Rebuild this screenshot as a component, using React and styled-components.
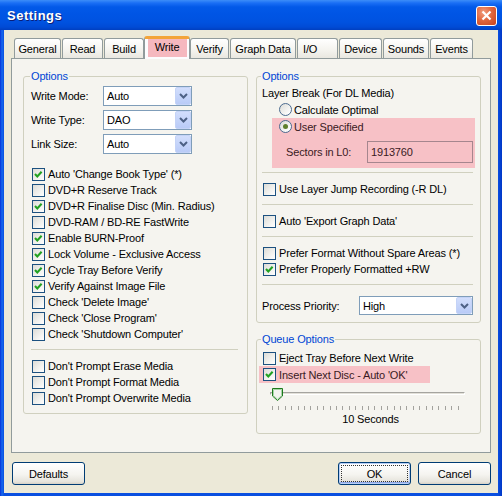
import React from 'react'
import styled, { createGlobalStyle } from 'styled-components'

const GlobalStyle = createGlobalStyle`
    html, body {
        margin: 0;
        padding: 0;
        background: #0B48DB;
    }
    * {
        box-sizing: border-box;
    }
`

const tabs = [
    { name: 'General', w: 47 },
    { name: 'Read', w: 41 },
    { name: 'Build', w: 40 },
    { name: 'Write', w: 46, active: true },
    { name: 'Verify', w: 39 },
    { name: 'Graph Data', w: 66 },
    { name: 'I/O', w: 41, left: true },
    { name: 'Device', w: 43 },
    { name: 'Sounds', w: 46 },
    { name: 'Events', w: 43 },
]

const leftChecks = [
    ["Auto 'Change Book Type' (*)", true],
    ['DVD+R Reserve Track', false],
    ['DVD+R Finalise Disc (Min. Radius)', true],
    ['DVD-RAM / BD-RE FastWrite', false],
    ['Enable BURN-Proof', true],
    ['Lock Volume - Exclusive Access', true],
    ['Cycle Tray Before Verify', true],
    ['Verify Against Image File', true],
    ["Check 'Delete Image'", false],
    ["Check 'Close Program'", false],
    ["Check 'Shutdown Computer'", false],
]

const promptChecks = [
    "Don't Prompt Erase Media",
    "Don't Prompt Format Media",
    "Don't Prompt Overwrite Media",
]

function CheckBox({ checked, label }) {
    return (
        <CheckRow>
            <Box>
                {checked && (
                    <svg width="11" height="11" viewBox="0 0 11 11">
                        <path d="M2 5 L4.3 7.4 L8.6 2.8" fill="none" stroke="#21A121" strokeWidth="2.1" />
                    </svg>
                )}
            </Box>
            <span>{label}</span>
        </CheckRow>
    )
}

function Radio({ checked, label }) {
    return (
        <RadioRow>
            <RadioCircle>{checked && <RadioDot />}</RadioCircle>
            <span>{label}</span>
        </RadioRow>
    )
}

function Combo({ value, width, height = 20 }) {
    return (
        <ComboBox $width={width} $height={height}>
            <span>{value}</span>
            <DropBtn>
                <svg width="9" height="6" viewBox="0 0 9 6">
                    <path d="M1 1 L4.5 4.5 L8 1" fill="none" stroke="#4D6185" strokeWidth="2" />
                </svg>
            </DropBtn>
        </ComboBox>
    )
}

export default function App() {
    return (
        <>
            <GlobalStyle />
            <Window>
                <TitleBar>
                    <Title>Settings</Title>
                    <CloseBtn>
                        <svg width="11" height="11" viewBox="0 0 11 11">
                            <path d="M1.5 1.5 L9.5 9.5 M9.5 1.5 L1.5 9.5" stroke="#fff" strokeWidth="2.2" />
                        </svg>
                    </CloseBtn>
                </TitleBar>
                <Client>
                    <TabStrip>
                        {tabs.map(t => (
                            <Tab key={t.name} $width={t.w} $active={t.active} $left={t.left}>
                                {t.active ? <TabMark>{t.name}</TabMark> : t.name}
                            </Tab>
                        ))}
                    </TabStrip>
                    <TabPage>
                        <Group $pad={7}>
                            <Legend>Options</Legend>
                            <FormRows>
                                <FormRow $label={72}>
                                    <span>Write Mode:</span>
                                    <Combo value="Auto" width={89} />
                                </FormRow>
                                <FormRow $label={72}>
                                    <span>Write Type:</span>
                                    <Combo value="DAO" width={89} />
                                </FormRow>
                                <FormRow $label={72}>
                                    <span>Link Size:</span>
                                    <Combo value="Auto" width={89} />
                                </FormRow>
                            </FormRows>
                            <CheckList>
                                {leftChecks.map(([label, on]) => (
                                    <CheckBox key={label} label={label} checked={on} />
                                ))}
                            </CheckList>
                            <Separator />
                            {promptChecks.map(label => (
                                <CheckBox key={label} label={label} />
                            ))}
                        </Group>

                        <RightColumn>
                            <Group $pad={5}>
                                <Legend>Options</Legend>
                                <TextRow>Layer Break (For DL Media)</TextRow>
                                <Indent $by={17}>
                                    <Radio label="Calculate Optimal" />
                                </Indent>
                                <Highlight>
                                    <Indent $by={7}>
                                        <Radio label="User Specified" checked />
                                    </Indent>
                                    <SectorRow>
                                        <span>Sectors in L0:</span>
                                        <SectorInput>1913760</SectorInput>
                                    </SectorRow>
                                </Highlight>
                                <Separator $top={4} />
                                <CheckBox label="Use Layer Jump Recording (-R DL)" />
                                <Separator />
                                <CheckBox label="Auto 'Export Graph Data'" />
                                <Separator />
                                <CheckBox label="Prefer Format Without Spare Areas (*)" />
                                <CheckBox label="Prefer Properly Formatted +RW" checked />
                                <Separator />
                                <FormRow $label={97} $top={11}>
                                    <span>Process Priority:</span>
                                    <Combo value="High" width={114} height={19} />
                                </FormRow>
                            </Group>

                            <Group $pad={5}>
                                <Legend>Queue Options</Legend>
                                <QueueBody>
                                    <CheckBox label="Eject Tray Before Next Write" />
                                    <QueueMark>
                                        <CheckBox label="Insert Next Disc - Auto 'OK'" checked />
                                    </QueueMark>
                                    <Slider>
                                        <Track />
                                        <Thumb width="11" height="13" viewBox="0 0 11 13">
                                            <path d="M0.5 0.5 H10.5 V8 L5.5 12.5 L0.5 8 Z" fill="#F3F3EF" stroke="#1C7A1C" strokeWidth="1" />
                                            <path d="M1.5 1.5 H9.5 V7.6 L5.5 11.2 L1.5 7.6 Z" fill="none" stroke="#A7D4A7" strokeWidth="1" />
                                        </Thumb>
                                        <Ticks />
                                    </Slider>
                                    <SliderLabel>10 Seconds</SliderLabel>
                                </QueueBody>
                            </Group>
                        </RightColumn>
                    </TabPage>
                    <Footer>
                        <Button>Defaults</Button>
                        <ButtonGroup>
                            <Button $default>OK</Button>
                            <Button>Cancel</Button>
                        </ButtonGroup>
                    </Footer>
                </Client>
            </Window>
        </>
    )
}

const Window = styled.div`
    width: 502px;
    height: 496px;
    display: flex;
    flex-direction: column;
    background: linear-gradient(to right, #0831D9 0, #166AEE 2px, #0A4FE0 4px, #0A4FE0 calc(100% - 4px), #0036C6 100%);
    font-family: "Liberation Sans", Arial, sans-serif;
    font-size: 11px;
    letter-spacing: -0.15px;
    color: #000;
`

const TitleBar = styled.div`
    height: 30px;
    flex-shrink: 0;
    display: flex;
    align-items: center;
    justify-content: space-between;
    padding: 0 5px 0 7px;
    background: linear-gradient(to bottom, #3C8DF8 0, #1A6FF5 3px, #0259E8 7px, #0055E5 14px, #0052E0 22px, #004BD6 27px, #003FC0 30px);
`

const Title = styled.span`
    color: #fff;
    font-weight: bold;
    font-size: 13px;
    letter-spacing: 0.5px;
    text-shadow: 1px 1px #0A1E78;
    margin-top: 1px;
`

const CloseBtn = styled.div`
    width: 21px;
    height: 20px;
    margin-top: 1px;
    display: flex;
    align-items: center;
    justify-content: center;
    border: 1px solid #fff;
    border-radius: 3px;
    background: radial-gradient(circle at 35% 30%, #F19D7F 0, #E1683F 45%, #C8421B 100%);
`

const Client = styled.div`
    flex: 1;
    margin: 0 4px 3px 4px;
    background: #ECE9D8;
    padding: 6px 7px 8px 7px;
    display: flex;
    flex-direction: column;
`

const TabStrip = styled.div`
    height: 22px;
    display: flex;
    align-items: flex-end;
    padding-left: 3px;
    position: relative;
    z-index: 1;
`

const Tab = styled.div`
    width: ${p => p.$width}px;
    height: ${p => (p.$active ? 23 : 20)}px;
    margin: ${p => (p.$active ? '0 0 -1px -1px' : '0 1px 0 0')};
    border: 1px solid #919B9C;
    border-bottom: none;
    border-radius: 3px 3px 0 0;
    border-top: ${p => (p.$active ? '3px solid #F3A43A' : '1px solid #919B9C')};
    background: ${p => (p.$active ? '#FCFCFE' : 'linear-gradient(to bottom, #FFFFFF 0%, #F4F3EE 60%, #E9E7E0 100%)')};
    display: flex;
    align-items: ${p => (p.$active ? 'flex-start' : 'center')};
    justify-content: ${p => (p.$left ? 'flex-start' : 'center')};
    padding-left: ${p => (p.$left ? 5 : 0)}px;
    white-space: nowrap;
    padding-top: ${p => (p.$active ? 0 : 1)}px;
`

const TabMark = styled.span`
    display: flex;
    align-items: center;
    justify-content: center;
    width: 39px;
    height: 18px;
    padding-bottom: 3px;
    background: #F5B8BF;
`

const TabPage = styled.div`
    height: 395px;
    border: 1px solid #919B9C;
    background: #F5F4EF;
    display: grid;
    grid-template-columns: 225px 225px;
    column-gap: 8px;
    align-items: start;
    padding: 11px 9px 0 11px;
`

const Group = styled.fieldset`
    margin: 0;
    border: 1px solid #D0D0BF;
    border-radius: 3px;
    padding: 0 ${p => p.$pad}px 7px ${p => p.$pad}px;
    min-width: 0;
`

const Legend = styled.legend`
    color: #0046D5;
    padding: 0 1px;
    line-height: 13px;
    margin-left: -1px;
`

const RightColumn = styled.div`
    display: flex;
    flex-direction: column;
    gap: 10px;
`

const FormRows = styled.div`
    display: flex;
    flex-direction: column;
    gap: 4px;
    margin-top: 3px;
`

const FormRow = styled.div`
    display: grid;
    grid-template-columns: ${p => p.$label}px auto;
    align-items: center;
    margin-top: ${p => p.$top || 0}px;
`

const ComboBox = styled.div`
    width: ${p => p.$width}px;
    height: ${p => p.$height}px;
    border: 1px solid #7F9DB9;
    background: #fff;
    display: flex;
    align-items: center;
    padding-left: 3px;
`

const DropBtn = styled.div`
    margin-left: auto;
    width: 16px;
    align-self: stretch;
    display: flex;
    align-items: center;
    justify-content: center;
    border: 1px solid #C4D3F7;
    border-radius: 2px;
    background: linear-gradient(to bottom, #D2DEFC 0%, #B9CBF7 100%);
`

const CheckList = styled.div`
    margin-top: 12px;
`

const CheckRow = styled.label`
    display: flex;
    align-items: center;
    gap: 3px;
    height: 16px;
    white-space: nowrap;
`

const Box = styled.span`
    width: 13px;
    height: 13px;
    margin-left: 1px;
    flex-shrink: 0;
    border: 1px solid #1C5180;
    background: linear-gradient(135deg, #DCDCD7 0%, #F2F2EF 60%, #FFFFFF 100%);
    display: flex;
    align-items: center;
    justify-content: center;
`

const RadioRow = styled.div`
    display: flex;
    align-items: center;
    gap: 2px;
    height: 17px;
`

const RadioCircle = styled.span`
    width: 13px;
    height: 13px;
    border-radius: 50%;
    border: 1px solid #4C6B8F;
    background: linear-gradient(135deg, #DCDCD7 0%, #FFFFFF 90%);
    display: flex;
    align-items: center;
    justify-content: center;
`

const RadioDot = styled.span`
    width: 5px;
    height: 5px;
    border-radius: 50%;
    background: #5E7F2C;
`

const Separator = styled.div`
    height: 1px;
    background: #D0D0BF;
    margin: ${p => (p.$top != null ? p.$top : 7)}px 2px 8px 0;
`

const TextRow = styled.div`
    height: 17px;
    display: flex;
    align-items: center;
    margin-top: 1px;
`

const Indent = styled.div`
    padding-left: ${p => p.$by}px;
`

const Highlight = styled.div`
    margin-left: 10px;
    background: #F7C1C6;
    color: #3A1A1E;
    padding-bottom: 5px;
`

const SectorRow = styled.div`
    display: grid;
    grid-template-columns: 81px 106px;
    align-items: center;
    padding-left: 14px;
    margin-top: 6px;
`

const SectorInput = styled.div`
    height: 22px;
    border: 1px solid #A5868E;
    padding-left: 3px;
    display: flex;
    align-items: center;
`

const QueueBody = styled.div`
    padding-top: 4px;
`

const QueueMark = styled.div`
    margin: 0 45px 0 -3px;
    padding-left: 3px;
    height: 17px;
    display: flex;
    align-items: center;
    background: #F7C1C6;
    color: #3A1A1E;
`

const Slider = styled.div`
    position: relative;
    width: 195px;
    margin: 0 0 0 8px;
    padding-top: 9px;
    height: 28px;
`

const Track = styled.div`
    height: 3px;
    border-top: 1px solid #A5A49F;
    border-left: 1px solid #A5A49F;
    border-bottom: 1px solid #fff;
    border-right: 1px solid #fff;
    background: #E2E0D8;
`

const Thumb = styled.svg`
    position: absolute;
    left: 2px;
    top: 5px;
`

const Ticks = styled.div`
    margin: 11px 0 0 2px;
    height: 4px;
    width: 192px;
    background: repeating-linear-gradient(to right, #A3A29D 0, #A3A29D 1px, transparent 1px, transparent 6.4px);
`

const SliderLabel = styled.div`
    text-align: center;
    margin: 2px 0 0 4px;
    line-height: 13px;
`

const Footer = styled.div`
    display: flex;
    justify-content: space-between;
    margin-top: 9px;
    padding-left: 1px;
`

const ButtonGroup = styled.div`
    display: flex;
    gap: 7px;
`

const Button = styled.div`
    width: 73px;
    height: 23px;
    border: 1px solid #003C74;
    border-radius: 3px;
    display: flex;
    align-items: center;
    justify-content: center;
    background: linear-gradient(to bottom, #FFFFFF 0%, #F5F4F0 55%, #E5E3DB 90%, #D6D0C5 100%);
    ${p => p.$default && `
        box-shadow: inset 0 0 0 1px #B8CFF6, inset 0 -1px 0 1px #8FA9E8;
        outline: 1px dotted #333;
        outline-offset: -4px;
    `}
`
